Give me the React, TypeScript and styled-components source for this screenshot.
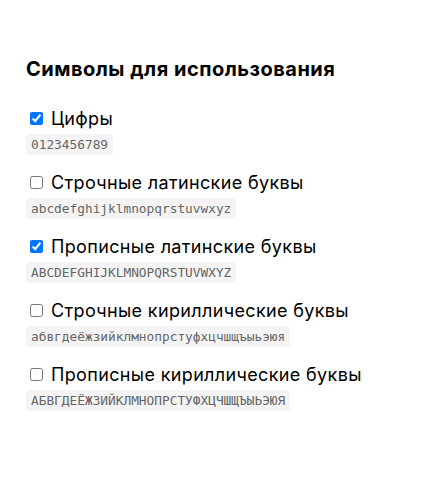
import styled, { createGlobalStyle } from "styled-components";

const GlobalStyle = createGlobalStyle`
  body {
    margin: 0;
    background: #fff;
    font-family: "Inter", "Open Sans", sans-serif;
    color: #000;
  }
`;

const Section = styled.section`
  padding: 57px 26px 40px;
`;

const Title = styled.h2`
  margin: 0 0 25px;
  font-size: 20px;
  line-height: 24px;
  font-weight: 700;
  letter-spacing: 0.5px;
`;

const List = styled.div`
  display: flex;
  flex-direction: column;
  gap: 15px;
`;

const Item = styled.div`
  display: flex;
  flex-direction: column;
  align-items: flex-start;
  gap: 4px;
`;

const Label = styled.label`
  display: flex;
  align-items: center;
  height: 24px;
  font-size: 18px;
  letter-spacing: 0.35px;
  cursor: pointer;
`;

const Checkbox = styled.input`
  width: 13px;
  height: 13px;
  margin: 0 8px 0 4px;
`;

const Code = styled.code`
  font-family: "DejaVu Sans Mono", "Liberation Mono", monospace;
  font-size: 12.8px;
  line-height: 15px;
  padding: 3px 5px;
  color: #666;
  background: #f4f4f4;
  border-radius: 3px;
`;

interface CharsetOption {
  label: string;
  chars: string;
  checked: boolean;
}

const options: CharsetOption[] = [
  { label: "Цифры", chars: "0123456789", checked: true },
  { label: "Строчные латинские буквы", chars: "abcdefghijklmnopqrstuvwxyz", checked: false },
  { label: "Прописные латинские буквы", chars: "ABCDEFGHIJKLMNOPQRSTUVWXYZ", checked: true },
  { label: "Строчные кириллические буквы", chars: "абвгдеёжзийклмнопрстуфхцчшщъыьэюя", checked: false },
  { label: "Прописные кириллические буквы", chars: "АБВГДЕЁЖЗИЙКЛМНОПРСТУФХЦЧШЩЪЫЬЭЮЯ", checked: false },
];

const App = () => {
  return (
    <>
      <GlobalStyle />
      <Section>
        <Title>Символы для использования</Title>
        <List>
          {options.map((o) => (
            <Item key={o.label}>
              <Label>
                <Checkbox type="checkbox" defaultChecked={o.checked} />
                {o.label}
              </Label>
              <Code>{o.chars}</Code>
            </Item>
          ))}
        </List>
      </Section>
    </>
  );
};

export default App;
